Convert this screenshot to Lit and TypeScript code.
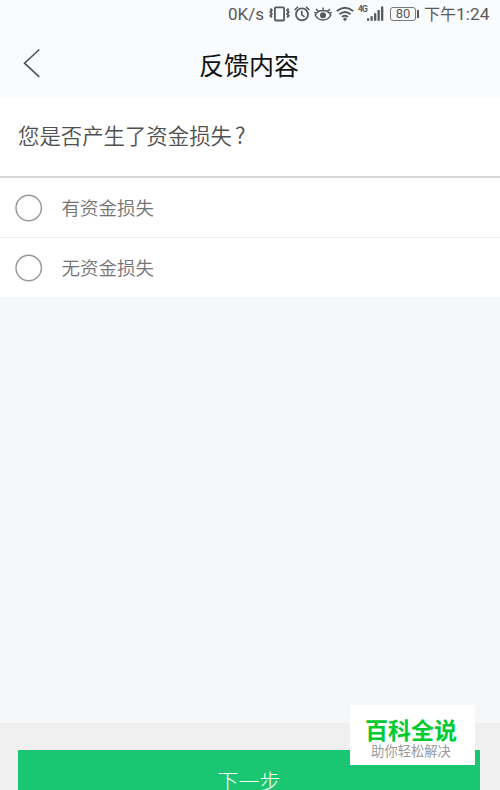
import { LitElement, html, css } from "lit";
import { customElement, property } from "lit/decorators.js";

@customElement("status-bar")
class StatusBar extends LitElement {
  static styles = css`
    :host {
      display: flex;
      align-items: center;
      justify-content: flex-end;
      height: 28px;
      padding-right: 11px;
      color: #58595b;
      font: 17px/28px Roboto, "Noto Sans CJK SC", sans-serif;
      white-space: nowrap;
    }
    svg { display: block; flex: none; fill: none; stroke: #58595b; }
    .solid { fill: #58595b; stroke: none; }
    .speed { margin-right: 4.5px; }
    .vibrate { margin-right: 4px; }
    .alarm { margin-right: 4px; }
    .eye { margin-right: 4px; }
    .wifi { margin-right: 4.5px; }
    .net { align-self: flex-start; margin-top: 4px; width: 9px; font: 700 8.5px/10px Roboto, sans-serif; letter-spacing: -0.8px; }
    .signal { margin-right: 6px; }
    .battery { display: flex; align-items: center; margin-right: 5.5px; }
    .cell { box-sizing: border-box; width: 26px; height: 14px; border: 1px solid #77787a; border-radius: 3px; font-size: 13px; line-height: 12px; text-align: center; }
    .tip { width: 2px; height: 8px; background: #58595b; margin-left: 0.5px; }
    .clock { display: flex; width: 65px; font-size: 17.3px; }
    .cjk { font-size: 16px; line-height: 29px; }
  `;
  render() {
    return html`
      <span class="speed">0K/s</span>
      <svg class="vibrate" width="21" height="16" viewBox="0 0 21 16" stroke-width="1.8">
        <rect x="5.9" y="1.3" width="9.2" height="13.2" rx="1" />
        <path d="M1.4 2.6l1.4 1.7-1.4 1.8 1.4 1.8-1.4 1.8 1.4 1.7M19.6 2.6l-1.4 1.7 1.4 1.8-1.4 1.8 1.4 1.8-1.4 1.7" stroke-width="2" />
      </svg>
      <svg class="alarm" width="16" height="16" viewBox="0 0 16 16" stroke-width="1.8">
        <circle cx="8" cy="8.4" r="6" />
        <path d="M7.8 4.8v4l2.8 2M.6 4L4 .9M15.4 4L12 .9" stroke-width="1.6" />
      </svg>
      <svg class="eye" width="18" height="16" viewBox="0 0 18 16" stroke-width="1.5">
        <path d="M1.2 9Q3.8 4.6 9 4.6T16.8 9Q14.2 14 9 14T1.2 9zM9 4.6V1.6M4.6 5.6L2 3M13.4 5.6L16 3M2.4 7.4L.4 6M15.6 7.4l2-1.4" />
        <circle class="solid" cx="9" cy="9.3" r="3" />
      </svg>
      <svg class="wifi" width="18" height="16" viewBox="0 0 18 16" stroke-width="1.9">
        <path d="M.8 5Q9-1.6 17.2 5M3.5 8.2q5.5-4.6 11 0M6 11q3-2.4 6 0" />
        <circle class="solid" cx="9" cy="13.2" r="1.6" />
      </svg>
      <span class="net">4G</span>
      <svg class="signal" width="17" height="16" viewBox="0 0 17 16">
        <path class="solid" d="M0 12.2h2.2v2.5H0zM3.5 10.2h2.3v4.5H3.5zM7 7.2h2.3v7.5H7zM10.5 4h2.3v10.7h-2.3zM14 .5h2.3v14.2H14z" />
      </svg>
      <span class="battery"><span class="cell">80</span><span class="tip"></span></span>
      <span class="clock"><span class="cjk">下午</span>1:24</span>
    `;
  }
}

@customElement("option-row")
class OptionRow extends LitElement {
  @property() label = "";
  static styles = css`
    :host {
      display: flex;
      align-items: center;
      box-sizing: border-box;
      height: 60px;
      padding-left: 14.5px;
      background: #fff;
    }
    .radio { flex: none; width: 28px; height: 28px; margin-right: 19px; fill: none; stroke: #999; stroke-width: 1.5; }
    .label { color: #747474; font: 350 18.5px/28px "Noto Sans CJK SC", sans-serif; padding-bottom: 1px; }
  `;
  render() {
    return html`
      <svg class="radio" viewBox="0 0 28 28"><circle cx="13.7" cy="14" r="12.7" /></svg>
      <span class="label">${this.label}</span>
    `;
  }
}

@customElement("app-root")
class AppRoot extends LitElement {
  static styles = css`
    :host {
      position: relative;
      display: flex;
      flex-direction: column;
      height: 790px;
      overflow: hidden;
      background: #f5f7f9;
      font-family: "Noto Sans CJK SC", sans-serif;
    }
    .top { height: 98px; background: #fafbfd; flex: none; }
    .nav { display: grid; grid-template-columns: 60px 1fr 60px; align-items: center; height: 70px; }
    .back { display: block; margin: 0 0 0 22px; fill: none; stroke: #505152; stroke-width: 1.6; }
    .title { text-align: center; color: #111; font-size: 25px; line-height: 36px; padding-top: 1px; margin-left: -2px; }
    .question { box-sizing: border-box; height: 80px; padding: 21px 18px 0; background: #fff; border-bottom: 2px solid #d5d5d6; color: #505050; font-size: 21.4px; font-weight: 350; line-height: 32px; flex: none; }
    .mark { margin-left: 3px; font-size: 22.5px; line-height: 1; }
    .divided { height: 60px; border-bottom: 1px solid #eff0f1; }
    .last { height: 59px; }
    .space { flex: 1; }
    .footer { box-sizing: border-box; height: 67px; padding: 27px 20px 0 18px; background: #f0f0f0; flex: none; }
    .next { height: 60px; border-radius: 1px; background: #1bc673; color: #fff; font-size: 21px; font-weight: 300; line-height: 61px; text-align: center; }
    .brand { position: absolute; left: 350px; top: 705px; box-sizing: border-box; width: 125px; height: 60px; padding-top: 10px; background: #fff; text-align: center; white-space: nowrap; }
    .name { color: #00cb32; font-size: 23px; font-weight: 700; line-height: 28px; margin-right: 3px; }
    .slogan { color: #999; font-size: 13.3px; line-height: 16px; margin-right: 3px; }
  `;
  render() {
    return html`
      <header class="top">
        <status-bar></status-bar>
        <div class="nav">
          <svg class="back" width="20" height="30" viewBox="0 0 20 30"><path d="M17.3 1.5L2.5 15.2l14.8 13.6" /></svg>
          <div class="title">反馈内容</div>
        </div>
      </header>
      <div class="question">您是否产生了资金损失<span class="mark">?</span></div>
      <option-row class="divided" label="有资金损失"></option-row>
      <option-row class="last" label="无资金损失"></option-row>
      <div class="space"></div>
      <footer class="footer"><div class="next">下一步</div></footer>
      <aside class="brand">
        <div class="name">百科全说</div>
        <div class="slogan">助你轻松解决</div>
      </aside>
    `;
  }
}
